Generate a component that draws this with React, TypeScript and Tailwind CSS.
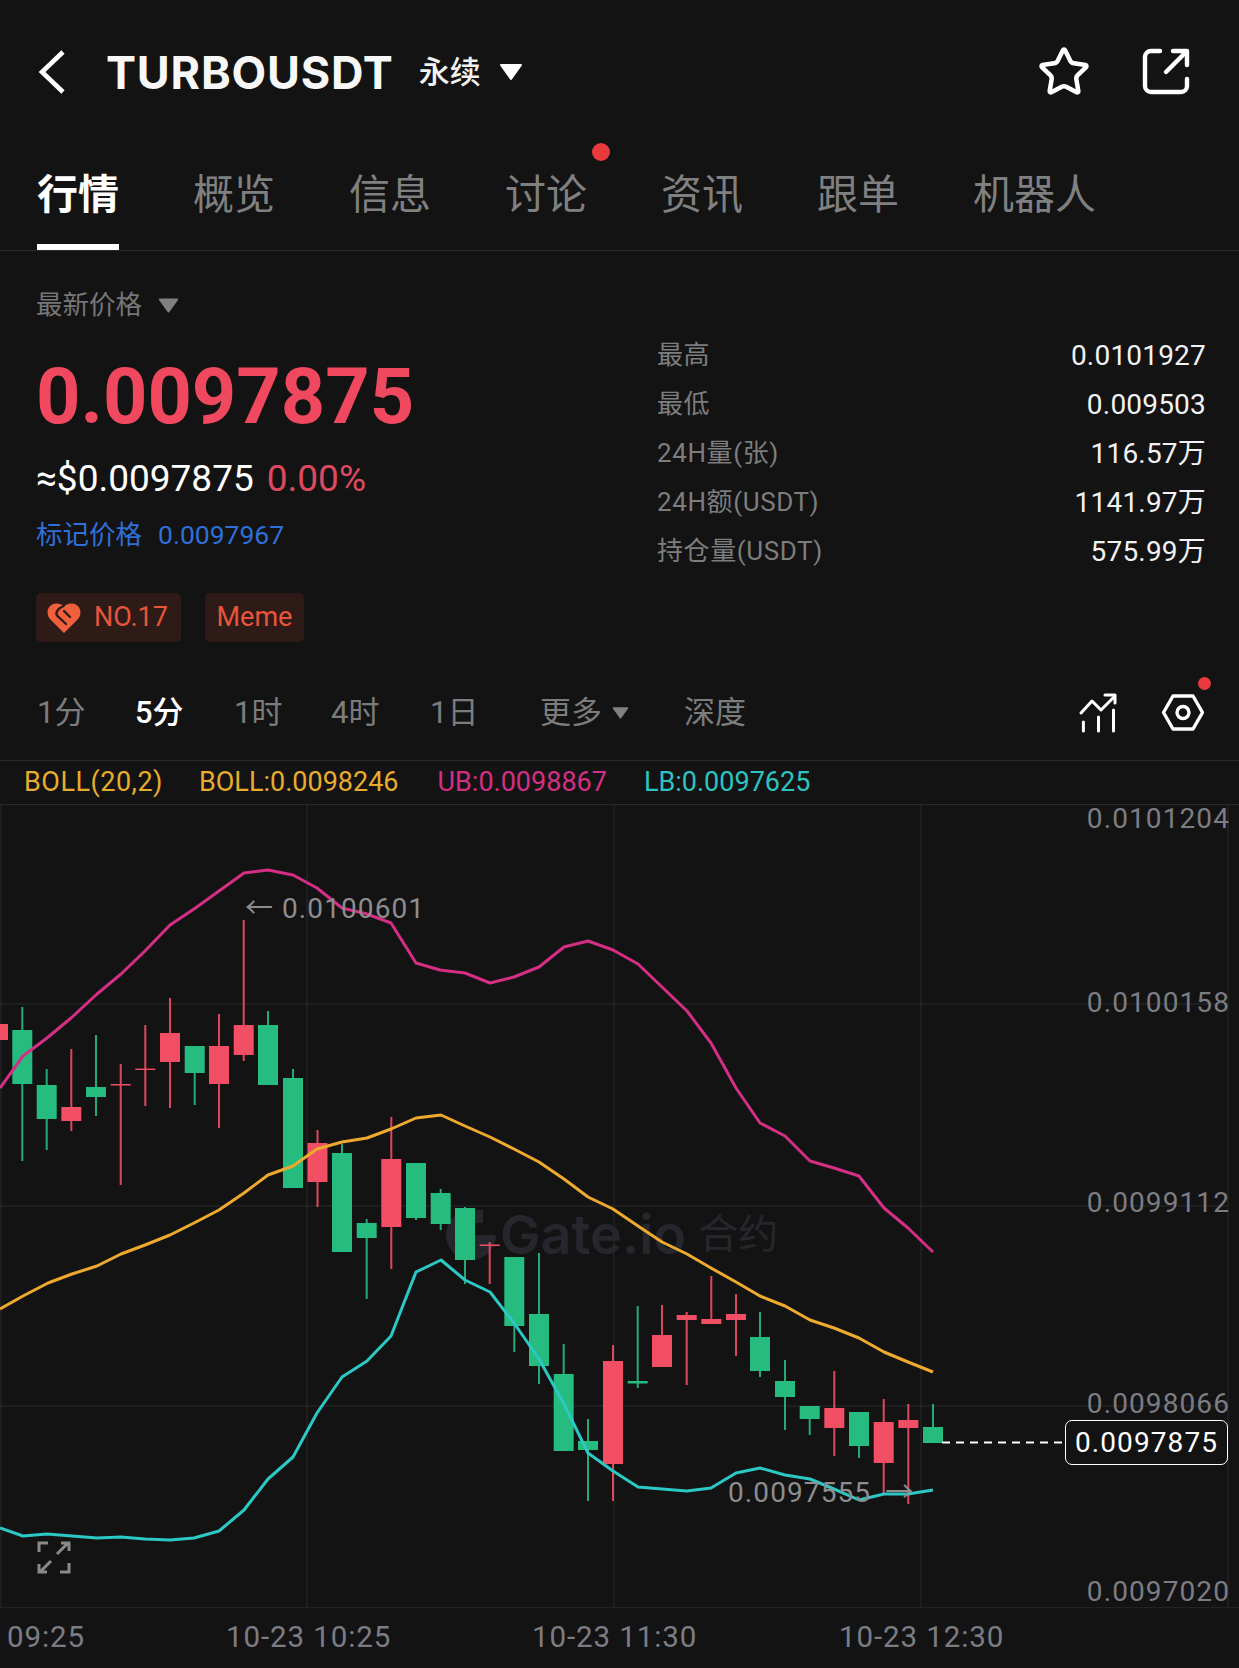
import { Star } from "lucide-react";

type Candle = [x: number, high: number, top: number, bottom: number, low: number, up: boolean];

// x, wick high, body top, body bottom, wick low, red?
const candles: Candle[] = [
  [-2, 1015, 1023, 1039, 1050, true],
  [22.3, 1006, 1029, 1083, 1160, false],
  [46.7, 1068, 1084, 1118, 1149, false],
  [71.3, 1048, 1106, 1120, 1130, true],
  [96, 1034, 1086, 1096, 1115, false],
  [120.7, 1063, 1083, 1084.5, 1184, true],
  [145.3, 1024, 1067.6, 1069, 1105, true],
  [170, 997, 1032, 1061, 1107, true],
  [194.7, 1045, 1045, 1072, 1104, false],
  [219, 1013, 1045, 1083, 1127, true],
  [243.7, 919, 1024, 1054, 1060, true],
  [268, 1010, 1024, 1084, 1084, false],
  [293, 1068, 1077, 1187, 1187, false],
  [317.5, 1129, 1142, 1181, 1206, true],
  [342, 1143, 1152, 1251, 1251, false],
  [366.7, 1218, 1222, 1237, 1298, false],
  [391.3, 1116, 1158, 1226, 1268, true],
  [416, 1162, 1162, 1217, 1219, false],
  [440.7, 1188, 1192, 1223, 1229, false],
  [465, 1206, 1207, 1259, 1283, false],
  [489.7, 1241, 1243.5, 1245, 1283, true],
  [514.3, 1256, 1256, 1325, 1351, false],
  [539, 1252, 1313, 1365, 1383, false],
  [563.7, 1343, 1373, 1450, 1450, false],
  [588, 1418, 1440, 1449, 1500, false],
  [613, 1344, 1360, 1463, 1500, true],
  [637.7, 1305, 1380, 1382.5, 1387, false],
  [662, 1304, 1334, 1366, 1366, true],
  [686.7, 1311, 1314, 1319, 1384, true],
  [711.3, 1275, 1318, 1323, 1323, true],
  [736, 1293, 1313, 1319, 1355, true],
  [760, 1311, 1336, 1370, 1376, false],
  [785, 1359, 1380, 1396, 1429, false],
  [809.7, 1405, 1405, 1418, 1434, false],
  [834.3, 1370, 1407, 1427, 1455, true],
  [859, 1411, 1411, 1445, 1457, false],
  [883.7, 1398, 1421, 1462, 1492, true],
  [908.3, 1403, 1419, 1427, 1503, true],
  [933, 1403, 1426, 1442, 1442, false],
];

const ub =
  "0,1087 23,1055 47,1037 71,1017 97,993 121,973 145,950 170,924 194,908 219,890 244,872 268,869 293,874 317,887 342,907 367,913 391,922 416,962 440,969 465,972 490,982 514,976 539,966 564,946 588,940 613,949 638,963 662,986 687,1010 711,1042 736,1087 760,1122 785,1135 810,1160 834,1167 859,1175 884,1207 908,1227 933,1251";
const boll =
  "0,1308 23,1295 48,1282 72,1273 97,1265 121,1253 145,1244 170,1234 194,1222 219,1209 244,1192 268,1174 293,1165 317,1148 342,1141 367,1137 391,1128 416,1117 441,1114 465,1125 490,1136 514,1148 539,1161 564,1178 588,1196 613,1208 638,1225 662,1241 687,1253 711,1267 736,1281 760,1295 785,1305 810,1319 834,1327 859,1337 884,1351 908,1361 933,1371";
const lb =
  "0,1527 23,1535 47,1533 72,1535 97,1537 121,1536 145,1538 170,1539 194,1537 219,1530 244,1509 268,1478 293,1456 317,1412 342,1376 367,1360 391,1335 416,1271 441,1259 465,1279 490,1291 514,1322 539,1358 564,1403 588,1452 613,1470 638,1486 662,1488 687,1490 711,1487 736,1472 760,1467 785,1474 810,1478 834,1488 859,1499 884,1493 908,1493 933,1489";

const tabs = ["行情", "概览", "信息", "讨论", "资讯", "跟单", "机器人"];
const stats = [
  ["最高", "0.0101927"],
  ["最低", "0.009503"],
  ["24H量(张)", "116.57万"],
  ["24H额(USDT)", "1141.97万"],
  ["持仓量(USDT)", "575.99万"],
];

function Triangle({ className = "" }: { className?: string }) {
  return (
    <svg viewBox="0 0 24 18" className={className}>
      <path d="M2 2H22L12 16Z" fill="currentColor" stroke="currentColor" strokeWidth="2" strokeLinejoin="round" />
    </svg>
  );
}

function PriceChart() {
  return (
    <svg viewBox="0 804 1239 802" width={1239} height={802} className="absolute left-0 top-0">
      {candles.map(([x, high, top, bottom, low, up]) => {
        const color = up ? "#f24e64" : "#26bb7f";
        return (
          <g key={x}>
            <rect x={x - 1} y={high} width={2} height={low - high} fill={color} opacity={0.9} />
            <rect x={x - 10} y={top} width={20} height={bottom - top} fill={color} />
          </g>
        );
      })}
      <polyline points={ub} fill="none" stroke="#d42f85" strokeWidth="3" strokeLinejoin="round" />
      <polyline points={boll} fill="none" stroke="#eeaa2e" strokeWidth="3" strokeLinejoin="round" />
      <polyline points={lb} fill="none" stroke="#2cc8c4" strokeWidth="3" strokeLinejoin="round" />
      <line x1="942" y1="1441.5" x2="1064" y2="1441.5" stroke="#fff" strokeWidth="1.8" strokeDasharray="8 6" />
    </svg>
  );
}

function ChartGrid() {
  return (
    <svg viewBox="0 804 1239 802" width={1239} height={802} className="absolute left-0 top-0">
      {[1003, 1205, 1405].map((y) => (
        <line key={y} x1="0" x2="1228" y1={y} y2={y} stroke="#2a2a2c" strokeWidth="1" />
      ))}
      {[1, 307, 614, 921, 1228].map((x) => (
        <line key={x} x1={x} x2={x} y1="804" y2="1606" stroke="#2a2a2c" strokeWidth="1" />
      ))}
    </svg>
  );
}

function Watermark() {
  return (
    <div className="absolute left-[446px] top-[400px] flex items-center text-[#26272d]">
      <svg viewBox="0 0 50 50" className="h-[50px] w-[50px]">
        <path d="M25 0A25 25 0 1 0 50 25H25V13H37V0Z" fill="currentColor" />
        <rect x="13" y="13" width="12" height="24" fill="#131314" />
      </svg>
      <span className="ml-[4px] font-['Inter',sans-serif] text-[54px] font-semibold leading-[60px]">Gate.io</span>
      <span className="ml-[12px] text-[40px] leading-[60px]">合约</span>
    </div>
  );
}

export default function App() {
  return (
    <div className="h-[1668px] w-[1239px] overflow-hidden bg-[#131314] font-['Roboto','Noto_Sans_CJK_SC',sans-serif] text-white">
      {/* header */}
      <div className="flex h-[144px] items-center pl-[36px] pr-[47px]">
        <svg viewBox="0 0 32 48" className="h-[48px] w-[32px]">
          <path d="M27 4L6 24L27 44" fill="none" stroke="#fff" strokeWidth="4.6" />
        </svg>
        <span className="ml-[38px] font-['Inter',sans-serif] text-[45px] font-bold leading-none tracking-[0.8px] text-[#f7f7f7]">
          TURBOUSDT
        </span>
        <span className="ml-[25px] text-[31px] font-medium leading-none text-[#f2f2f2]">永续</span>
        <Triangle className="ml-[18px] h-[18px] w-[24px] text-white" />
        <Star size={54} strokeWidth={2} className="ml-auto text-white" />
        <svg viewBox="0 0 52 52" fill="none" stroke="#fff" strokeWidth="4.4" strokeLinecap="round" strokeLinejoin="round" className="ml-[49px] h-[52px] w-[52px]">
          <path d="M20 5H11a6 6 0 0 0-6 6V40a6 6 0 0 0 6 6H41a6 6 0 0 0 6-6V33" />
          <path d="M26 26L46 6" />
          <path d="M33 5H47V19" />
        </svg>
      </div>

      {/* tabs */}
      <div className="flex h-[107px] gap-[74px] border-b border-[#2a2a2c] pl-[37px]">
        {tabs.map((tab, i) => (
          <div key={tab} className="relative flex h-full flex-col justify-between pt-[27px]">
            <span className={`text-[41px] leading-[48px] ${i === 0 ? "font-bold text-white" : "text-[#808080]"}`}>{tab}</span>
            {i === 0 && <div className="h-[6px] w-full bg-white" />}
            {tab === "讨论" && <div className="absolute left-[87px] top-[-1px] h-[18px] w-[18px] rounded-full bg-[#ea3a3d]" />}
          </div>
        ))}
      </div>

      {/* price */}
      <div className="flex">
        <div className="w-[657px] pl-[36px] pt-[36px]">
          <div className="flex h-[36px] items-center text-[26.5px] text-[#767676]">
            最新价格
            <Triangle className="ml-[16px] h-[17px] w-[21px] text-[#808080]" />
          </div>
          <div className="mt-[34px] text-[77.5px] font-bold leading-[80px] text-[#f0485f]">0.0097875</div>
          <div className="mt-[20px] flex h-[44px] items-center text-[37px]">
            <span>≈$0.0097875</span>
            <span className="ml-[13px] text-[#dc4a60]">0.00%</span>
          </div>
          <div className="mt-[16px] flex h-[36px] items-center text-[26.5px] text-[#2f6fd8]">
            标记价格
            <span className="ml-[16px]">0.0097967</span>
          </div>
          <div className="mt-[40px] flex gap-[24px]">
            <div className="flex h-[49px] w-[145px] items-center rounded-[5px] bg-[#2e1a16] pl-[11px] text-[27px] text-[#e8553a]">
              <svg viewBox="0 0 34 30" className="h-[30px] w-[34px]">
                <path d="M17 30L3 16C-2 10 1 1 9 0.5C12 0.3 15 1.5 17 3.5C19 1.5 22 0.3 25 0.5C33 1 36 10 31 16Z" fill="#f0603c" />
                <path d="M16.5 3C10 6 8 10 10.5 13L19 21M17 8L23 14" fill="none" stroke="#2e1a16" strokeWidth="2.4" strokeLinecap="round" />
              </svg>
              <span className="ml-[13px]">NO.17</span>
            </div>
            <div className="flex h-[49px] w-[99px] items-center justify-center rounded-[5px] bg-[#2e1a16] text-[27px] text-[#e8553a]">
              Meme
            </div>
          </div>
        </div>
        <div className="flex-1 pr-[33px] pt-[80px]">
          {stats.map(([label, value]) => (
            <div key={label} className="flex h-[49px] items-center justify-between">
              <span className="text-[26px] tracking-[0.6px] text-[#7d7d7d]">{label}</span>
              <span className="text-[28px] tracking-[0.2px] text-[#f2f2f2]">{value}</span>
            </div>
          ))}
        </div>
      </div>

      {/* timeframes */}
      <div className="mt-[24px] flex h-[95px] items-center border-b border-[#2a2a2c] pl-[37px] pr-[34px] text-[31px] text-[#7c7c7c]">
        <span className="w-[98px]">1分</span>
        <span className="w-[99px] font-medium text-white">5分</span>
        <span className="w-[97px]">1时</span>
        <span className="w-[99px]">4时</span>
        <span className="w-[110px]">1日</span>
        <span>更多</span>
        <Triangle className="ml-[10px] h-[14px] w-[17px] text-[#808080]" />
        <span className="ml-[55px]">深度</span>
        <svg viewBox="0 0 40 42" fill="none" stroke="#fff" strokeWidth="3" strokeLinecap="round" strokeLinejoin="round" className="ml-auto h-[42px] w-[40px]">
          <path d="M3 21L14 9L23 18L36 5" />
          <path d="M27 3H37V11" />
          <path d="M5.4 30V39M20.5 25V39M35.5 18V39" />
        </svg>
        <div className="relative ml-[43px] h-[40px] w-[44px]">
          <svg viewBox="0 0 44 40" fill="none" stroke="#fff" strokeWidth="3.4" strokeLinejoin="round" className="h-[40px] w-[44px]">
            <path d="M2.5 19.5L12 3H32L41.5 19.5L32 36H12Z" />
            <circle cx="22" cy="19.5" r="6" />
          </svg>
          <div className="absolute left-[37px] top-[-16px] h-[13px] w-[13px] rounded-full bg-[#ea3a3d]" />
        </div>
      </div>

      {/* indicator legend */}
      <div className="flex h-[44px] items-center border-b border-[#2a2a2c] pl-[24px] text-[27px] leading-none">
        <span className="tracking-[0.5px] text-[#e8ac2e]">BOLL(20,2)</span>
        <span className="ml-[36px] text-[#e8ac2e]">BOLL:0.0098246</span>
        <span className="ml-[39px] text-[#d42f85]">UB:0.0098867</span>
        <span className="ml-[37px] text-[#2cc4c0]">LB:0.0097625</span>
      </div>

      {/* chart */}
      <div className="relative h-[802px] w-full text-[28px] leading-[36px] text-[#7c7d83]">
        <ChartGrid />
        <Watermark />
        <PriceChart />
        <span className="absolute right-[9px] top-[-4px] tracking-[1.1px]">0.0101204</span>
        <span className="absolute right-[9px] top-[180px] tracking-[1.1px]">0.0100158</span>
        <span className="absolute right-[9px] top-[380px] tracking-[1.1px]">0.0099112</span>
        <span className="absolute right-[9px] top-[581px] tracking-[1.1px]">0.0098066</span>
        <span className="absolute right-[9px] top-[769px] tracking-[1.1px]">0.0097020</span>
        <span className="absolute left-[245px] top-[86px] flex items-center tracking-[1.1px] text-[#8d8d8d]">
          <span className="w-[37px]">←</span>0.0100601
        </span>
        <span className="absolute left-[728px] top-[670px] flex items-center tracking-[1.1px] text-[#8d8d8d]">
          0.0097555<span className="ml-[14px] w-[30px]">→</span>
        </span>
        <div className="absolute left-[1065px] top-[615px] flex h-[45px] w-[163px] items-center justify-center rounded-[7px] border-[1.5px] border-white bg-[#131314] tracking-[1.1px] text-white">
          0.0097875
        </div>
        <svg viewBox="0 0 34 33" fill="none" stroke="#8a8a8a" strokeWidth="3" className="absolute left-[37px] top-[736px] h-[33px] w-[34px]">
          <path d="M2 11V2H11M32 22V31H23" />
          <path d="M20 13L31 2M24 2H32V10M14 20L3 31M2 23V31H10" />
        </svg>
      </div>

      {/* time axis */}
      <div className="relative h-[62px] border-y border-[#222224] text-[29.5px] leading-[36px] tracking-[0.9px] text-[#7c7d83]">
        <span className="absolute left-[7px] top-[11px]">09:25</span>
        <span className="absolute left-[226px] top-[11px]">10-23 10:25</span>
        <span className="absolute left-[532px] top-[11px]">10-23 11:30</span>
        <span className="absolute left-[839px] top-[11px]">10-23 12:30</span>
      </div>
    </div>
  );
}
